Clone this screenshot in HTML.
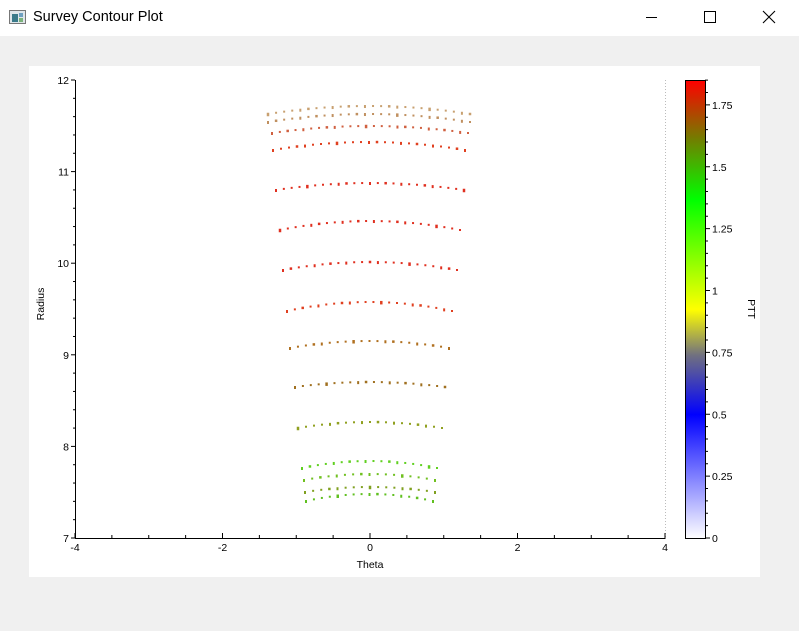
<!DOCTYPE html>
<html><head><meta charset="utf-8"><style>
html,body{margin:0;padding:0;width:799px;height:631px;overflow:hidden;background:#f0f0f0;font-family:"Liberation Sans",sans-serif}
#tb{position:absolute;left:0;top:0;width:799px;height:36px;background:#fff}
#tb .t{position:absolute;left:33px;top:9px;font-size:14.5px;color:#000}
#panel{position:absolute;left:29px;top:66px;width:731px;height:511px;background:#fff}
svg text{font-family:"Liberation Sans",sans-serif;font-size:10.5px;fill:#000}
</style></head><body>
<div id="tb">
<svg width="18" height="16" style="position:absolute;left:9px;top:10px"><rect x="0.5" y="0.5" width="16" height="13" fill="#dfe6ea" stroke="#777"/><rect x="3" y="4" width="6" height="8" fill="#3a7a8a"/><rect x="10" y="3" width="4" height="4" fill="#6fa0c0"/><rect x="10" y="8" width="4" height="4" fill="#7ab27a"/></svg>
<span class="t">Survey Contour Plot</span>
<svg width="799" height="36" style="position:absolute;left:0;top:0"><line x1="646" y1="17.5" x2="657" y2="17.5" stroke="#000"/><rect x="704.5" y="11.5" width="11" height="11" fill="none" stroke="#000"/><path d="M763 11 L775 23 M775 11 L763 23" stroke="#000" stroke-width="1.1"/></svg>
</div>
<div id="panel"></div>
<svg id="s" width="799" height="631" style="position:absolute;left:0;top:0">
<defs><linearGradient id="cb" x1="0" y1="1" x2="0" y2="0">
<stop offset="0" stop-color="#ffffff"/><stop offset="0.27" stop-color="#0000ff"/><stop offset="0.40" stop-color="#707080"/><stop offset="0.50" stop-color="#ffff00"/><stop offset="0.74" stop-color="#00ff00"/><stop offset="0.87" stop-color="#708000"/><stop offset="1" stop-color="#ff0000"/>
</linearGradient></defs>
<line x1="665.5" y1="80" x2="665.5" y2="538" stroke="#bbb" stroke-dasharray="1,2"/>
<line x1="75.5" y1="80" x2="75.5" y2="538.5" stroke="#000"/>
<line x1="75" y1="538.5" x2="665.5" y2="538.5" stroke="#000"/>
<g id="ax"></g><g id="pts"></g>
<rect x="685.5" y="80.5" width="20" height="458" fill="url(#cb)" stroke="#000"/>
<text x="40" y="300" transform="rotate(-90 44 300)" text-anchor="middle">Radius</text>
<text x="370" y="568" text-anchor="middle">Theta</text>
<text x="748" y="309" transform="rotate(90 748 309)" text-anchor="middle">PTT</text>
</svg>
<script>
var ns="http://www.w3.org/2000/svg",ax=document.getElementById("ax"),pts=document.getElementById("pts");
function el(t,a,p,txt){var e=document.createElementNS(ns,t);for(var k in a)e.setAttribute(k,a[k]);if(txt)e.textContent=txt;(p||ax).appendChild(e);return e;}
for(var i=0;i<=25;i++){var y=80+i*458/25;var maj=i%5==0;el("line",{x1:maj?71:73,y1:y,x2:75,y2:y,stroke:"#000"});if(maj)el("text",{x:69,y:y+4,"text-anchor":"end"},0,String(12-i/5));}
for(var i=0;i<=16;i++){var x=75+i*590/16;var maj=i%4==0;el("line",{x1:x,y1:538,x2:x,y2:maj?533:535,stroke:"#000"});if(maj)el("text",{x:x,y:551,"text-anchor":"middle"},0,String(-4+i/2));}
for(var i=0;i<=37;i++){var v=i*0.05;var y=538-v*247.5;if(y<80)break;var maj=i%5==0;el("line",{x1:705,y1:y,x2:maj?710:708,y2:y,stroke:"#000"});if(maj)el("text",{x:712,y:y+4},0,String(Math.round(v*100)/100));}
var rows=[[106,114,268,470,"#c8a070"],[114,122,268,470,"#c09060"],[126,133,272,468,"#d06040"],[142,150,273,465,"#e04020"],[183,190,276,464,"#e03020"],[221,230,280,460,"#e03020"],[262,270,283,457,"#e03020"],[302,311,287,452,"#e04020"],[341,348,290,449,"#b07020"],[382,387,295,445,"#a07020"],[422,428,298,442,"#90a020"],[461,468,302,437,"#60d020"],[474,480,304,435,"#70c020"],[487,492,305,435,"#80a020"],[494,501,306,433,"#60c020"]];
rows.forEach(function(r,j){var n=Math.round((r[3]-r[2])/8);for(var k=0;k<=n;k++){var t=k/n,x=r[2]+t*(r[3]-r[2]);var u=2*t-1;var y=r[0]+(r[1]-r[0])*u*u;var w=(k*7+j*3)%5==0?2.5:2;el("rect",{x:x-w/2,y:y-w/2,width:w,height:w+(k%4==0?1:0),fill:r[4]},pts);}});
</script>
</body></html>
